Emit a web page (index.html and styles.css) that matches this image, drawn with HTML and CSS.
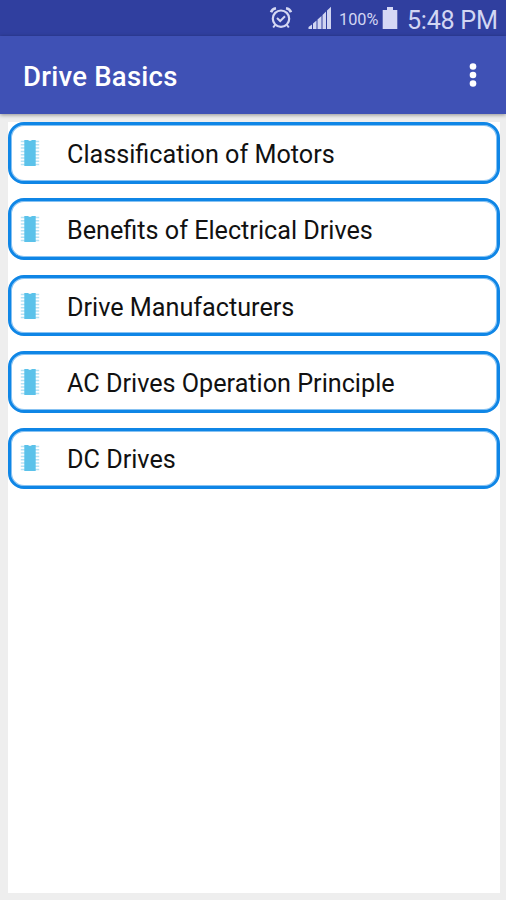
FILE: index.html
```html
<!DOCTYPE html>
<html lang="en">
<head>
<meta charset="utf-8">
<title>Drive Basics</title>
<link rel="stylesheet" href="styles.css">
</head>
<body>
<svg width="0" height="0" class="defs" aria-hidden="true">
  <symbol id="chip" viewBox="0 0 20 28">
    <path d="M.8 2.5H19.2M.8 5.8H19.2M.8 9.1H19.2M.8 12.4H19.2M.8 15.700H19.2M.8 19H19.2M.8 22.300H19.2M.8 25.600H19.2" stroke="#b5e2f5" stroke-width="1.5"/>
    <path d="M4.3 1H8Q10 3.2 12 1H15.7V27H4.3Z" fill="#5bc2ea"/>
  </symbol>
</svg>
<header class="status">
  <svg class="alarm" width="24" height="24" viewBox="0 0 24 24" fill="none" stroke="#d5d8f3">
    <circle cx="12" cy="12.7" r="8.2" stroke-width="2.2"/>
    <path d="M2 6.2Q3.2 2.8 7 2.2M22 6.2Q20.8 2.8 17 2.2" stroke-width="2.6"/>
    <path d="M8 12L11.2 15L16 10.3" stroke-width="2"/>
    <path d="M6 19L4.2 21.5M18 19L19.8 21.5" stroke-width="2"/>
  </svg>
  <svg class="signal" width="24" height="24" viewBox="0 0 24 24" fill="#d0d4f1">
    <path d="M.5 23V21L4 18.500V23ZM5 23V17.500L8.500 14.500V23ZM9.500 23V13.500L13.500 10V23ZM14.500 23V9L18 5.500V23ZM19 23V4.500L23 .8V23Z"/>
  </svg>
  <span class="percent">100%</span>
  <svg class="battery" width="16" height="24" viewBox="0 0 16 24"><path d="M5 1H11V4H15.300V23H.7V4H5Z" fill="#d5d8f5"/></svg>
  <span class="clock">5:48 PM</span>
</header>
<div class="appbar">
  <h1>Drive Basics</h1>
  <svg width="10" height="26" viewBox="0 0 10 26" fill="#fff"><circle cx="5" cy="4.500" r="3.300"/><circle cx="5" cy="13" r="3.300"/><circle cx="5" cy="21.500" r="3.300"/></svg>
</div>
<main>
  <ul class="list">
    <li><svg class="chip"><use href="#chip"/></svg><span>Classification of Motors</span></li>
    <li><svg class="chip"><use href="#chip"/></svg><span>Benefits of Electrical Drives</span></li>
    <li><svg class="chip"><use href="#chip"/></svg><span>Drive Manufacturers</span></li>
    <li><svg class="chip"><use href="#chip"/></svg><span>AC Drives Operation Principle</span></li>
    <li><svg class="chip"><use href="#chip"/></svg><span>DC Drives</span></li>
  </ul>
</main>
</body>
</html>
```
FILE: styles.css
```css
* { box-sizing: border-box; }
body {
  margin: 0;
  height: 900px;
  display: flex;
  flex-direction: column;
  background: #eee;
  font-family: Roboto, "Liberation Sans", sans-serif;
  white-space: nowrap;
  overflow: hidden;
}
.defs { display: none; }
.status {
  height: 36px;
  flex: none;
  display: flex;
  align-items: center;
  padding-left: 269px;
  background: #303f9f;
  color: #d2d6f3;
}
.status svg { flex: none; }
.signal { margin: 0 0 1px 15px; }
.percent { width: 40px; margin: 2px 0 0 7px; font-size: 16.300px; }
.battery { margin: 0 0 1px 3px; }
.clock { margin: 4px 0 0 9px; font-size: 25.200px; letter-spacing: -.3px; }
.appbar {
  height: 78px;
  flex: none;
  display: flex;
  align-items: center;
  justify-content: space-between;
  padding: 0 28px 0 23px;
  background: #3f51b5;
  color: #fff;
  box-shadow: 0 1px 4px rgba(0, 0, 0, .4);
}
.appbar h1 { margin: 4px 0 0; font-size: 27.500px; font-weight: 500; line-height: 32px; letter-spacing: .25px; }
.appbar svg { margin-bottom: 1px; }
main { flex: 1; padding: 8px 6px 7px 8px; }
.list {
  height: 771px;
  margin: 0;
  padding: 0;
  list-style: none;
  display: flex;
  flex-direction: column;
  gap: 14.900px;
  background: #fff;
}
.list li {
  height: 61.500px;
  flex: none;
  display: flex;
  align-items: center;
  gap: 27px;
  padding-left: 9px;
  border: 3px solid #0f86e6;
  border-radius: 16px;
  box-shadow: inset 0 0 0 1px rgba(15, 134, 230, .5);
  font-size: 25.200px;
  color: #111;
}
.list span { padding-top: 3px; }
.chip { width: 20px; height: 28px; flex: none; }
```
